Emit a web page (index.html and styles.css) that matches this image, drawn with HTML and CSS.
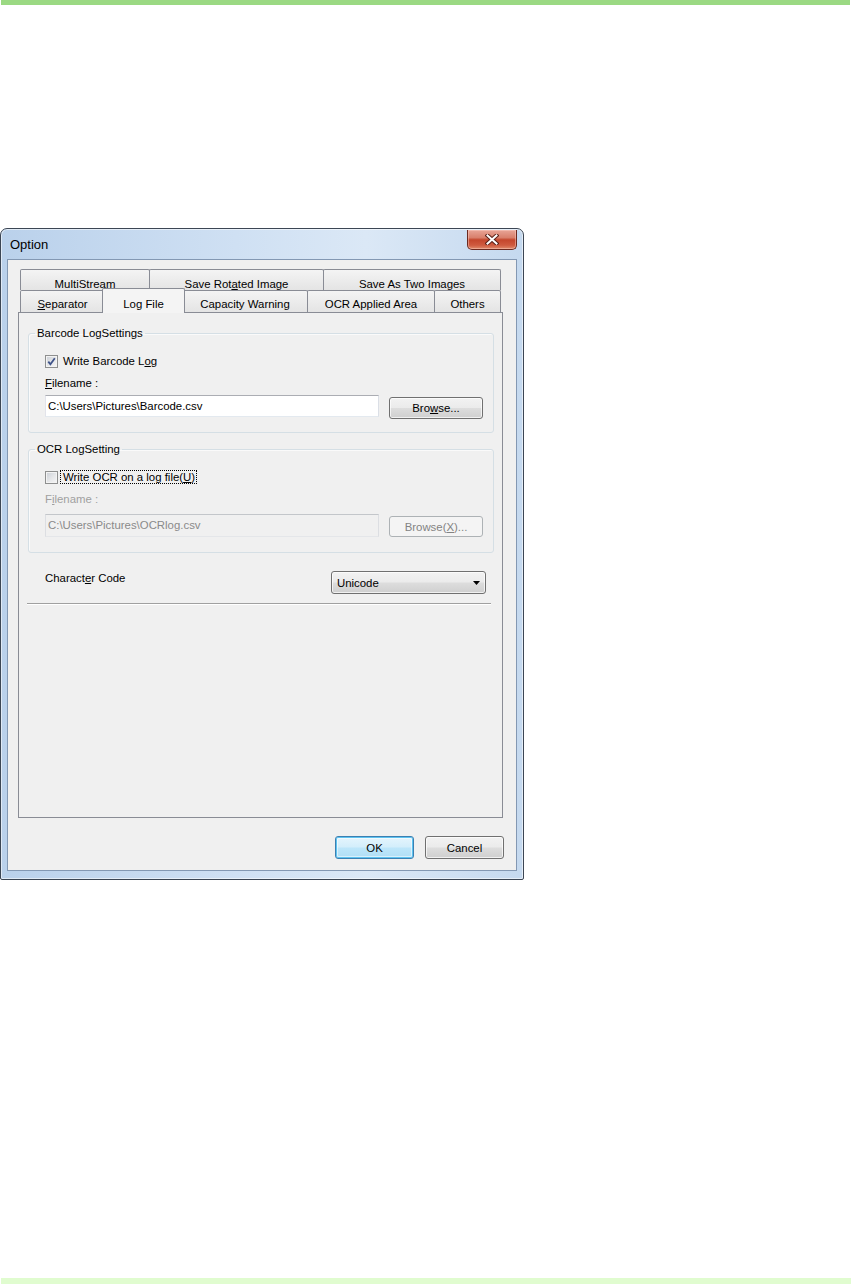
FILE: index.html
```html
<!DOCTYPE html>
<html lang="en">
<head>
  <meta charset="UTF-8" />
  <title>Option</title>
  <link rel="stylesheet" href="styles.css">
</head>
<body>
  <div class="page">
    <div class="top-rule"></div>

    <div class="dialog">
      <div class="titlebar">
        <span class="title">Option</span>
        <div class="close">
          <svg width="14" height="11" viewBox="0 0 14 11">
            <path d="M2.5 1.5 L11.5 9.5 M11.5 1.5 L2.5 9.5" stroke="#5a2118" stroke-width="4" stroke-linecap="square"/>
            <path d="M2.5 1.5 L11.5 9.5 M11.5 1.5 L2.5 9.5" stroke="#fff" stroke-width="2" stroke-linecap="square"/>
          </svg>
        </div>
      </div>

      <div class="client">
        <div class="tabctl">
          <div class="tab-row back">
            <div class="tab w130">MultiStream</div>
            <div class="tab w175">Save Rot<u>a</u>ted Image</div>
            <div class="tab w178">Save As Two Images</div>
          </div>
          <div class="tab-row front">
            <div class="tab w85"><u>S</u>eparator</div>
            <div class="tab active">Log File</div>
            <div class="tab w126">Capacity Warning</div>
            <div class="tab w128">OCR Applied Area</div>
            <div class="tab w67">Others</div>
          </div>

          <div class="panel">
            <fieldset class="group">
              <legend>Barcode LogSettings</legend>
              <div class="group-body">
                <div class="check-row">
                  <span class="checkbox">
                    <svg width="9" height="9" viewBox="0 0 9 9"><path d="M1.3 4.6 L3.4 7.2 L7.8 1.2" fill="none" stroke="#3f5389" stroke-width="1.8"/></svg>
                  </span>
                  <span class="check-text">Write Barcode L<u>o</u>g</span>
                </div>
                <div class="label"><u>F</u>ilename :</div>
                <div class="field-row">
                  <div class="text-input">C:\Users\Pictures\Barcode.csv</div>
                  <button class="btn">Bro<u>w</u>se...</button>
                </div>
              </div>
            </fieldset>

            <fieldset class="group second">
              <legend>OCR LogSetting</legend>
              <div class="group-body">
                <div class="check-row">
                  <span class="checkbox"></span>
                  <span class="check-text focused">Write OCR on a log file(<u>U</u>)</span>
                </div>
                <div class="label disabled">F<u>i</u>lename :</div>
                <div class="field-row">
                  <div class="text-input disabled">C:\Users\Pictures\OCRlog.csv</div>
                  <button class="btn" disabled>Browse(<u>X</u>)...</button>
                </div>
              </div>
            </fieldset>

            <div class="char-row">
              <span>Charact<u>e</u>r Code</span>
              <div class="select">
                <span>Unicode</span>
                <svg width="7" height="4" viewBox="0 0 7 4"><path d="M0 0 H7 L3.5 4 Z" fill="#000"/></svg>
              </div>
            </div>
            <div class="rule"></div>
          </div>
        </div>

        <div class="actions">
          <button class="btn primary">OK</button>
          <button class="btn">Cancel</button>
        </div>
      </div>
    </div>

    <div class="bottom-rule"></div>
  </div>
</body>
</html>
```

FILE: styles.css
```css
body {
  margin: 0;
  background: #fff;
  font-family: "Liberation Sans", Arial, sans-serif;
  font-size: 11.4px;
  color: #000;
}

.page {
  height: 1284px;
  display: flex;
  flex-direction: column;
}

.top-rule {
  height: 5px;
  margin: 0 1px;
  background: #9bd983;
}

.bottom-rule {
  height: 6px;
  margin: auto 0 0 1px;
  background: #e0fccf;
}

/* window frame */
.dialog {
  margin-top: 223px;
  width: 524px;
  box-sizing: border-box;
  border: 1px solid #3c4654;
  border-radius: 7px 7px 2px 2px;
  padding: 0 6px 8px;
  background: linear-gradient(90deg, #bad1eb 0%, #cfe0f3 45%, #dbe8f6 70%, #c5d9ef 100%);
  box-shadow: inset 0 0 0 1px rgba(255, 255, 255, 0.55);
}

.titlebar {
  height: 30px;
  display: flex;
  align-items: center;
}

.title {
  font-size: 13px;
  padding-left: 3px;
}

.close {
  margin-left: auto;
  align-self: flex-start;
  margin-top: 1px;
  width: 50px;
  height: 20px;
  box-sizing: border-box;
  border: 1px solid #6b2a20;
  border-top: 0;
  border-radius: 0 0 5px 5px;
  background: linear-gradient(#e8a597 0%, #d9806c 40%, #c4462c 52%, #cf5a3f 80%, #e08b6c 100%);
  box-shadow: inset 0 0 0 1px rgba(255, 210, 200, 0.45);
  display: flex;
  align-items: center;
  justify-content: center;
}

.client {
  border: 1px solid #8398b3;
  background: #f0f0f0;
  padding: 9px 12px 11px 10px;
}

/* tabs */
.tabctl {
  width: 485px;
}

.tab-row {
  display: flex;
  padding-left: 2px;
}

.tab-row.back { height: 21px; }
.tab-row.front { height: 22px; }

.tab {
  box-sizing: border-box;
  height: 100%;
  margin-left: -1px;
  border: 1px solid #898c95;
  border-bottom: 0;
  border-radius: 2px 2px 0 0;
  background: linear-gradient(#f4f4f4, #e4e4e4);
  text-align: center;
  line-height: 14px;
  white-space: nowrap;
}

.tab:first-child { margin-left: 0; }
.back .tab { padding-top: 7px; }
.front .tab { padding-top: 6px; }

.tab.active {
  position: relative;
  z-index: 1;
  width: 83px;
  height: 25px;
  margin: -2px -2px 0 -3px;
  padding-top: 8px;
  background: #f4f4f4;
}

.w67 { width: 67px; }
.w85 { width: 85px; }
.w126 { width: 126px; }
.w128 { width: 128px; }
.w130 { width: 130px; }
.w175 { width: 175px; }
.w178 { width: 178px; }

.panel {
  height: 506px;
  box-sizing: border-box;
  border: 1px solid #898c95;
  background: #f0f0f0;
  padding-top: 13px;
}

/* group boxes */
.group {
  margin: 0 8px 0 9px;
  padding: 0;
  min-width: 0;
  border: 1px solid #d5dfe5;
  border-radius: 3px;
  box-shadow: inset 1px 1px 0 #fafafa;
}

.group.second {
  margin-top: 9px;
}

.group legend {
  margin-left: 6px;
  padding: 0 2px;
  line-height: 14px;
}

.group-body {
  padding: 14px 0 13px 16px;
}

.group.second .group-body {
  padding-bottom: 15px;
}

.check-row {
  display: flex;
  align-items: center;
  gap: 2px;
  height: 14px;
}

.checkbox {
  width: 13px;
  height: 13px;
  box-sizing: border-box;
  border: 1px solid #8e8f8f;
  background: linear-gradient(135deg, #c9ced5 0%, #e6e7e9 55%, #f6f6f6 100%);
  box-shadow: inset 0 0 0 1px #f3f3f3;
  display: flex;
  align-items: center;
  justify-content: center;
}

.check-text {
  border: 1px solid transparent;
  padding: 0 1px 0 2px;
  line-height: 12px;
}

.check-text.focused {
  border: 1px dotted #000;
}

.label {
  margin-top: 8px;
  line-height: 14px;
}

.disabled {
  color: #a0a0a0;
}

.field-row {
  display: flex;
  align-items: flex-start;
  gap: 10px;
  margin-top: 5px;
}

.group.second .field-row {
  margin-top: 8px;
}

.text-input {
  width: 334px;
  height: 22px;
  box-sizing: border-box;
  border: 1px solid;
  border-color: #abadb3 #dbdfe6 #e3e9ef #e2e3ea;
  background: #fff;
  padding-left: 2px;
  line-height: 20px;
}

.text-input.disabled {
  height: 23px;
  border-color: #c3c6ca #dcdee2 #e4e6e9 #dcdee2;
  background: #f0f0f0;
  color: #8a8a8a;
}

/* buttons */
.btn {
  width: 94px;
  height: 22px;
  margin-top: 2px;
  padding: 0;
  box-sizing: border-box;
  border: 1px solid #707070;
  border-radius: 3px;
  background: linear-gradient(#f2f2f2 0%, #ebebeb 48%, #dddddd 52%, #cfcfcf 100%);
  box-shadow: inset 0 0 0 1px rgba(255, 255, 255, 0.7);
  font: inherit;
  color: #000;
}

.btn:disabled {
  height: 21px;
  border-color: #adb2b5;
  background: #f4f4f4;
  box-shadow: none;
  color: #838383;
}

.actions {
  display: flex;
  justify-content: flex-end;
  gap: 11px;
  margin-top: 18px;
}

.actions .btn {
  width: 79px;
  height: 23px;
  margin-top: 0;
}

.btn.primary {
  border-color: #3c7fb1;
  background: linear-gradient(#e5f5fd 0%, #d3eefb 48%, #bde6fa 52%, #b0def5 100%);
  box-shadow: inset 0 0 0 1px #5ec3f0, inset 0 0 0 2px rgba(255, 255, 255, 0.5);
}

/* character code */
.char-row {
  display: flex;
  justify-content: space-between;
  align-items: flex-start;
  margin-top: 18px;
  padding: 0 16px 0 26px;
  line-height: 14px;
}

.select {
  width: 155px;
  height: 23px;
  box-sizing: border-box;
  border: 1px solid #707070;
  border-radius: 3px;
  background: linear-gradient(#f2f2f2 0%, #ebebeb 48%, #dddddd 52%, #cfcfcf 100%);
  box-shadow: inset 0 0 0 1px rgba(255, 255, 255, 0.7);
  display: flex;
  align-items: center;
  justify-content: space-between;
  padding: 0 5px 0 5px;
}

.rule {
  margin: 9px 11px 0 8px;
  border-top: 1px solid #a0a0a0;
  border-bottom: 1px solid #fff;
}
```
